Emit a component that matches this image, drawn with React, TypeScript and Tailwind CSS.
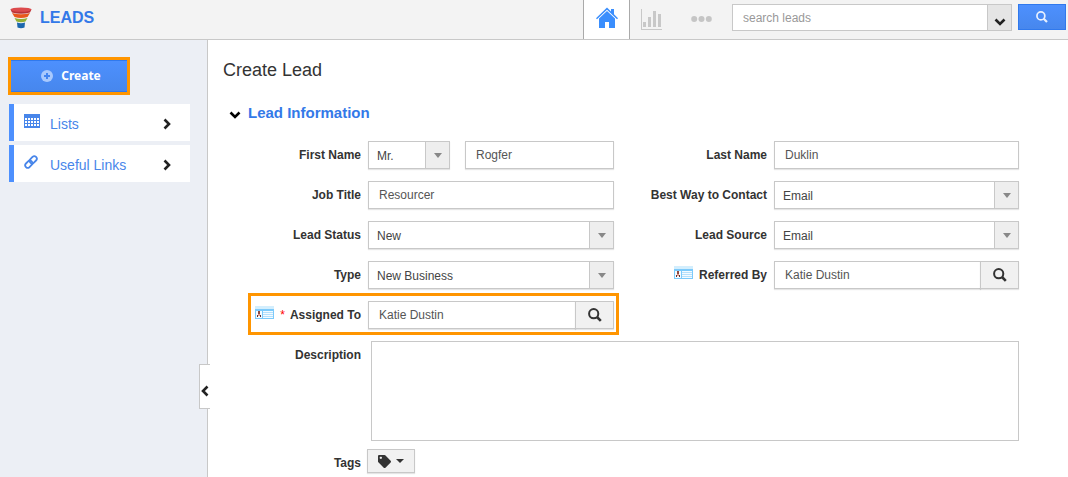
import { useState } from "react";
import type { ReactNode } from "react";
import { FaTag } from "react-icons/fa";
import clsx from "clsx";

const sidebarLinks = [
  { title: "Lists", icon: <GridIcon /> },
  { title: "Useful Links", icon: <LinkIcon /> },
];

const controlClass =
  "block h-7 w-full min-w-0 border border-[#c8c8c8] bg-white text-xs shadow-[0_1px_1px_rgba(0,0,0,0.1)] outline-none";

function FunnelIcon() {
  return (
    <svg viewBox="0 0 22 22" className="h-[22px] w-[22px]">
      <path d="M.5 2.500h21l-1.500 3q-9 2.500-18 0z" fill="#b93236" />
      <ellipse cx="11" cy="2.600" rx="10.500" ry="2.200" fill="#dc4a4c" />
      <path d="M2 6q9 2.600 18 0l-2.500 4q-6.500 2-13 0z" fill="#e8581c" />
      <path d="M4.500 11q6.500 2 13 0l-2 3.500q-4.500 1.500-9 0z" fill="#92b035" />
      <path d="M7 15.500q4 1.300 8 0l-.5 5q-3.500 1.500-7 0z" fill="#1c67ad" />
    </svg>
  );
}

function HomeIcon() {
  return (
    <svg viewBox="0 0 22 22" className="h-[22px] w-[22px]" fill="#3a8efd">
      <path d="M0 11.200 11 .5l4 3.900V2h3v5.300l4 3.900-1 1.100L11 2.800 1 12.300z" />
      <path d="M3 11.500l8-7.500 8 7.500V21h-6v-6H9v6H3z" />
    </svg>
  );
}

function ChartIcon() {
  return (
    <svg viewBox="0 0 21 21" className="h-[21px] w-[21px]" fill="#c8c8c8">
      <path d="M0 0h1v20h20v1H0zM2 13h3v5H2zM7 8h3v10H7zM12 2h3v16h-3zM17 5h3v13h-3z" />
    </svg>
  );
}

function DotsIcon() {
  return (
    <svg viewBox="0 0 21 6" className="h-[6px] w-[21px]" fill="#c5c5c5">
      <circle cx="3.200" cy="3" r="3" />
      <circle cx="10.500" cy="3" r="3" />
      <circle cx="17.800" cy="3" r="3" />
    </svg>
  );
}

function SearchIcon({ className }: { className?: string }) {
  return (
    <svg viewBox="0 0 14 14" className={className} fill="none" stroke="currentColor">
      <circle cx="5.700" cy="5.700" r="4.600" strokeWidth="2" />
      <path d="M9 9l3.800 3.800" strokeWidth="2.600" />
    </svg>
  );
}

function Chevron({ className }: { className?: string }) {
  return (
    <svg viewBox="0 0 8 12" className={clsx("h-3 w-2", className)} fill="none" stroke="currentColor">
      <path d="M1.500 1.500 6 6l-4.500 4.500" strokeWidth="2.600" />
    </svg>
  );
}

function GridIcon() {
  return (
    <svg viewBox="0 0 16 14" className="h-[14px] w-4">
      <path d="M0 0h16v14H0z" fill="#4886ea" />
      <path
        d="M1 4h2v2H1zM4 4h2v2H4zM7 4h2v2H7zM10 4h2v2h-2zM13 4h2v2h-2zM1 7h2v2H1zM4 7h2v2H4zM7 7h2v2H7zM10 7h2v2h-2zM13 7h2v2h-2zM1 10h2v2H1zM4 10h2v2H4zM7 10h2v2H7zM10 10h2v2h-2zM13 10h2v2h-2z"
        fill="#fff"
      />
    </svg>
  );
}

function LinkIcon() {
  return (
    <svg viewBox="0 0 14 14" className="size-[14px]" fill="none" stroke="#4886ea" strokeWidth="1.800">
      <rect x="-4" y="-2.500" width="8" height="5" rx="2.500" transform="translate(4.800 9.200) rotate(-45)" />
      <rect x="-4" y="-2.500" width="8" height="5" rx="2.500" transform="translate(9.200 4.800) rotate(-45)" />
    </svg>
  );
}

function PlusIcon() {
  return (
    <svg viewBox="0 0 12 12" className="size-3">
      <circle cx="6" cy="6" r="6" fill="#a9c9fd" />
      <path d="M6 3v6M3 6h6" stroke="#4385f0" strokeWidth="2" />
    </svg>
  );
}

function ContactCardIcon() {
  return (
    <svg viewBox="0 0 19 13" className="h-[13px] w-[19px] shrink-0">
      <path d="M0 0h19v3H0z" fill="#d3eefd" />
      <path d="M0 3h19v10H0z" fill="#7ccafb" />
      <path d="M1 5h6v7H1zM8 5h10v7H8z" fill="#f4fbff" />
      <path d="M8 6h10v1H8zM8 8h10v1H8zM8 10h10v1H8z" fill="#b5e0fc" />
      <path d="M3 5h2v3H3z" fill="#8e4a42" />
      <path d="M2 9h1v2H2zM5 9h1v2H5z" fill="#5c2f35" />
      <path d="M3 8h2v2H3z" fill="#e39b8b" />
    </svg>
  );
}

type FieldProps = {
  id: string;
  label: string;
  card?: boolean;
  required?: boolean;
  highlight?: boolean;
  children: ReactNode;
};

function Field({ id, label, card, required, highlight, children }: FieldProps) {
  return (
    <div className="relative flex items-center gap-[7px]">
      <div className="flex w-[153px] shrink-0 items-center justify-end">
        {card && (
          <span className="mr-[6px] pb-[6px]">
            <ContactCardIcon />
          </span>
        )}
        {required && <span className="mr-[5px] text-xs text-[#f00]">*</span>}
        <label htmlFor={id} className="text-xs font-bold whitespace-nowrap">
          {label}
        </label>
      </div>
      <div className="flex min-w-0 flex-1">{children}</div>
      {highlight && (
        <div className="pointer-events-none absolute -top-2 -right-[5px] -bottom-[6px] left-10 border-3 border-[#ff9500]" />
      )}
    </div>
  );
}

function TextInput({ id, value }: { id: string; value: string }) {
  return <input id={id} defaultValue={value} className={clsx(controlClass, "px-[10px] text-[#555]")} />;
}

function Select({ id, options, label }: { id: string; options: string[]; label?: string }) {
  return (
    <div className="relative w-full">
      <select
        id={id}
        aria-label={label}
        className={clsx(controlClass, "appearance-none pt-[2px] pr-7 pl-2 text-[#444]")}
      >
        {options.map((option) => (
          <option key={option}>{option}</option>
        ))}
      </select>
      <span className="pointer-events-none absolute inset-y-0 right-0 flex w-[25px] items-center justify-center border border-[#c8c8c8] bg-[#eee]">
        <svg viewBox="0 0 8 5" className="h-[5px] w-2">
          <path d="M0 0h8L4 5z" fill="#888" />
        </svg>
      </span>
    </div>
  );
}

function Lookup({ id, value }: { id: string; value: string }) {
  return (
    <>
      <TextInput id={id} value={value} />
      <button
        type="button"
        aria-label="Look up"
        className="-ml-px flex h-7 w-[39px] shrink-0 items-center justify-center border border-[#c8c8c8] bg-[#f1f1f1] text-[#333] shadow-[0_1px_1px_rgba(0,0,0,0.1)]"
      >
        <SearchIcon className="size-[14px]" />
      </button>
    </>
  );
}

function Header() {
  return (
    <header className="flex h-10 items-stretch justify-between border-b border-[#c8c8c8] bg-[#f3f3f3]">
      <div className="flex items-center gap-2 pb-1 pl-[10px]">
        <FunnelIcon />
        <span className="text-base leading-5 font-bold text-[#3379e8]">LEADS</span>
      </div>
      <div className="flex pr-[2px]">
        <a
          href="#home"
          aria-label="Home"
          className="flex w-[47px] items-center justify-center border-x border-[#aaa] bg-white pb-1"
        >
          <HomeIcon />
        </a>
        <a href="#reports" aria-label="Reports" className="ml-[11px] flex items-center">
          <ChartIcon />
        </a>
        <button type="button" aria-label="More" className="ml-[29px] flex items-center pb-px">
          <DotsIcon />
        </button>
        <div className="ml-5 flex items-start pt-1">
          <input
            aria-label="Search leads"
            placeholder="search leads"
            className="h-[27px] w-[255px] border border-r-0 border-[#c8c8c8] bg-white px-[10px] text-xs outline-none placeholder:text-[#999]"
          />
          <button
            type="button"
            aria-label="Search options"
            className="flex h-[27px] w-[25px] items-center justify-center border border-[#c8c8c8] bg-[#e5e5e5] pt-2 text-[#222]"
          >
            <Chevron className="rotate-90" />
          </button>
          <button
            type="button"
            aria-label="Search"
            className="ml-[6px] flex h-[26px] w-12 items-center justify-center border border-[#3079ed] bg-linear-to-b from-[#4d90fe] to-[#4787ed] text-[#e8f0fe]"
          >
            <SearchIcon className="size-3" />
          </button>
        </div>
      </div>
    </header>
  );
}

function Sidebar() {
  return (
    <aside className="relative w-[208px] shrink-0 border-r border-[#c8c8c8] bg-[#eceff5] pt-[17px]">
      <button
        type="button"
        className="ml-2 flex h-[38px] w-[122px] border-3 border-[#ff9500] font-['Noto_Sans',sans-serif] text-xs font-bold text-white"
      >
        <span className="flex h-full w-full items-center justify-center gap-2 border-y border-[#3079ed] bg-linear-to-b from-[#4d90fe] to-[#4787ed] pl-1">
          <PlusIcon />
          Create
        </span>
      </button>
      <nav className="mt-[9px] mr-[17px] ml-[9px] flex flex-col gap-1">
        {sidebarLinks.map((link) => (
          <a
            key={link.title}
            href="#"
            className="flex h-[37px] items-center border-l-5 border-[#4d90fe] bg-white pr-[19px] pl-[10px] text-sm text-[#4886ea]"
          >
            <span className="flex w-[26px] pb-1">{link.icon}</span>
            <span className="pt-[2px]">{link.title}</span>
            <Chevron className="mt-[2px] ml-auto text-[#222]" />
          </a>
        ))}
      </nav>
      <button
        type="button"
        aria-label="Collapse sidebar"
        className="absolute top-[324px] -right-[3px] flex h-[45px] w-[11px] items-center justify-center border border-r-0 border-[#c8c8c8] bg-white pt-[9px] text-[#222]"
      >
        <Chevron className="rotate-180" />
      </button>
    </aside>
  );
}

function LeadForm() {
  const [open, setOpen] = useState(true);

  return (
    <main className="min-w-0 flex-1 bg-white pt-[18px] pr-[49px]">
      <h1 className="ml-[15px] text-lg leading-6 text-[#333]">Create Lead</h1>
      <h2 className="mt-[21px] ml-[22px] text-[15px] leading-5 font-bold text-[#3379e8]">
        <button type="button" aria-expanded={open} onClick={() => setOpen(!open)} className="flex items-center gap-2">
          <span className="flex w-[10px] justify-center pt-1 text-black">
            <Chevron className="rotate-90" />
          </span>
          Lead Information
        </button>
      </h2>
      {open && (
        <form className="mt-[18px] text-[#333]">
          <div className="grid grid-cols-[406fr_405fr]">
            <div className="flex flex-col gap-3">
              <Field id="firstName" label="First Name">
                <div className="mr-[15px] w-[82px] shrink-0">
                  <Select id="salutation" label="Salutation" options={["Mr.", "Mrs.", "Ms."]} />
                </div>
                <TextInput id="firstName" value="Rogfer" />
              </Field>
              <Field id="jobTitle" label="Job Title">
                <TextInput id="jobTitle" value="Resourcer" />
              </Field>
              <Field id="status" label="Lead Status">
                <Select id="status" options={["New", "Contacted"]} />
              </Field>
              <Field id="type" label="Type">
                <Select id="type" options={["New Business", "Existing Business"]} />
              </Field>
              <Field id="assignedTo" label="Assigned To" card required highlight>
                <Lookup id="assignedTo" value="Katie Dustin" />
              </Field>
            </div>
            <div className="flex flex-col gap-3">
              <Field id="lastName" label="Last Name">
                <TextInput id="lastName" value="Duklin" />
              </Field>
              <Field id="contactWay" label="Best Way to Contact">
                <Select id="contactWay" options={["Email", "Phone"]} />
              </Field>
              <Field id="source" label="Lead Source">
                <Select id="source" options={["Email", "Web"]} />
              </Field>
              <Field id="referredBy" label="Referred By" card>
                <Lookup id="referredBy" value="Katie Dustin" />
              </Field>
            </div>
          </div>
          <div className="mt-3 flex gap-[10px]">
            <label htmlFor="description" className="w-[153px] shrink-0 text-right text-xs leading-7 font-bold">
              Description
            </label>
            <textarea
              id="description"
              className="block h-[100px] min-w-0 flex-1 resize-none border border-[#c8c8c8] p-2 text-xs outline-none"
            />
          </div>
          <div className="mt-2 flex items-center gap-[6px]">
            <label htmlFor="tags" className="w-[153px] shrink-0 pt-[3px] text-right text-xs font-bold">
              Tags
            </label>
            <button
              id="tags"
              type="button"
              className="flex h-6 w-12 items-center justify-center gap-[5px] border border-[#c8c8c8] bg-[#f1f1f1] shadow-[0_1px_1px_rgba(0,0,0,0.1)]"
            >
              <FaTag className="size-[13px]" />
              <svg viewBox="0 0 8 4" className="h-1 w-2">
                <path d="M0 0h8L4 4z" fill="#333" />
              </svg>
            </button>
          </div>
        </form>
      )}
    </main>
  );
}

export default function App() {
  return (
    <div className="flex min-h-screen flex-col font-['Liberation_Sans',Arial,sans-serif]">
      <Header />
      <div className="flex flex-1">
        <Sidebar />
        <LeadForm />
      </div>
    </div>
  );
}
